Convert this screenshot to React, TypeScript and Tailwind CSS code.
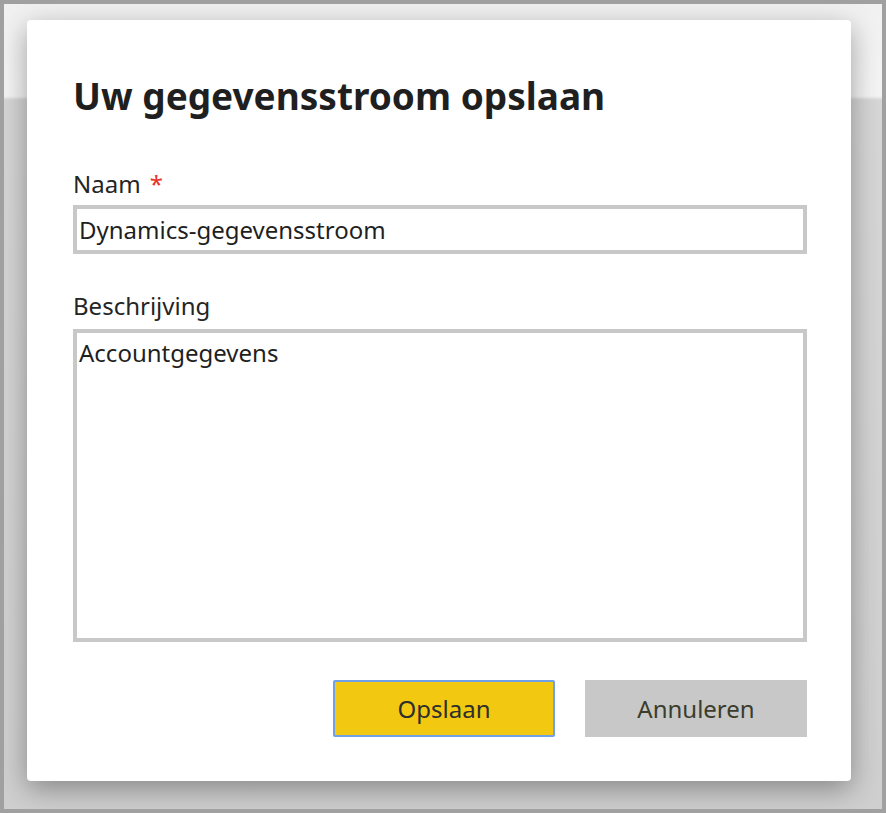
export default function App() {
  return (
    <div
      className="w-[886px] h-[813px] border-4 border-[#a0a0a0] bg-[linear-gradient(to_bottom,#f1f1f1_0,#f4f4f4_92px,#d6d6d6_96px,#cfcfcf_100%)] overflow-hidden"
      style={{ fontFamily: '"Noto Sans", "Open Sans", sans-serif' }}
    >
      <div className="ml-[23px] mt-[16px] w-[824px] h-[761px] bg-white rounded-[4px] shadow-[0_8px_28px_rgba(0,0,0,0.35)] pl-[46px] pr-[44px] pt-[53px] flex flex-col">
        <h1 className="text-[37px] leading-[45px] font-bold text-[#1f1f1f]">
          Uw gegevensstroom opslaan
        </h1>

        <label className="mt-[51px] text-[24px] leading-[30px] text-[#252525]">
          Naam <span className="text-[#e8312b] ml-[3px]">*</span>
        </label>
        <div className="mt-[6px] h-[49px] w-[734px] border-[4px] border-[#c8c8c8] flex items-center px-[2px] text-[24px] text-[#1f1f1f]">
          Dynamics-gegevensstroom
        </div>

        <label className="mt-[37px] text-[24px] leading-[30px] text-[#252525]">
          Beschrijving
        </label>
        <div className="mt-[8px] h-[313px] w-[734px] border-[4px] border-[#c8c8c8] px-[2px] pt-[5px] text-[24px] leading-[30px] text-[#1f1f1f]">
          Accountgegevens
        </div>

        <div className="mt-[38px] flex justify-end gap-[30px] w-[734px]">
          <button className="w-[222px] h-[57px] bg-[#f2c811] border-2 border-[#6fa0e8] rounded-[2px] text-[24px] text-[#2e2e2e]">
            Opslaan
          </button>
          <button className="w-[222px] h-[57px] bg-[#c8c8c8] text-[24px] text-[#3a3d2c]">
            Annuleren
          </button>
        </div>
      </div>
    </div>
  );
}
